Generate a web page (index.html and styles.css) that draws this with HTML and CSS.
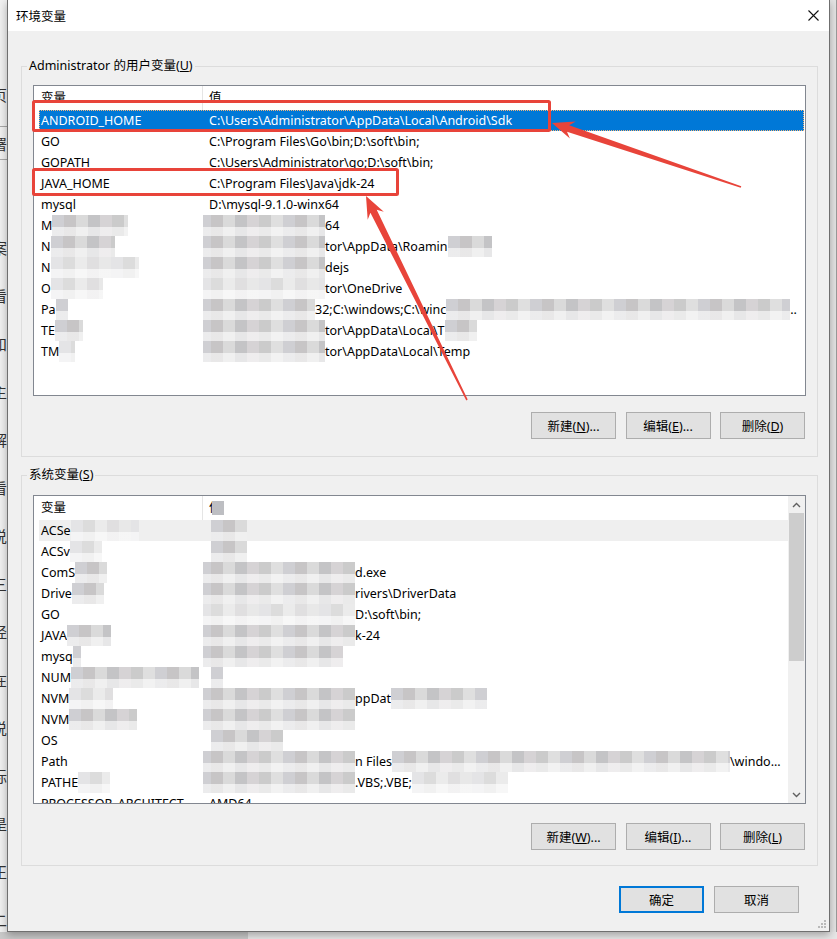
FILE: index.html
```html
<!DOCTYPE html>
<html lang="zh-CN">
<head>
<meta charset="UTF-8">
<title>环境变量</title>
<link rel="stylesheet" href="styles.css">
</head>
<body>
<div class="desk">
    <div class="behind">
        <div class="bh-char">页</div>
        <div class="bh-char bh-boxed">署</div>
        <div class="bh-gap"></div>
        <div class="bh-char">案</div>
        <div class="bh-char">看</div>
        <div class="bh-char">和</div>
        <div class="bh-char">主</div>
        <div class="bh-char">解</div>
        <div class="bh-char">看</div>
        <div class="bh-char">说</div>
        <div class="bh-char">三</div>
        <div class="bh-char">经</div>
        <div class="bh-char">在</div>
        <div class="bh-char">说</div>
        <div class="bh-char">标</div>
        <div class="bh-char">是</div>
        <div class="bh-char">正</div>
        <div class="bh-char">二</div>
    </div>

    <div class="dialog">
        <div class="titlebar">
            <span class="title">环境变量</span>
            <svg class="close" width="11" height="11" viewBox="0 0 11 11">
                <path d="M0.5 0.5 L10.5 10.5 M10.5 0.5 L0.5 10.5" stroke="#111" stroke-width="1.1" fill="none"/>
            </svg>
        </div>

        <div class="dialog-body">
            <fieldset class="group">
                <legend>Administrator 的用户变量(<u>U</u>)</legend>
                <div class="listview">
                    <div class="lv-body">
                        <div class="lv-head"><span class="col-name">变量</span><span class="col-val">值</span></div>
                        <div class="lv-row selected"><span class="col-name">ANDROID_HOME</span><span class="col-val">C:\Users\Administrator\AppData\Local\Android\Sdk</span></div>
                        <div class="lv-row"><span class="col-name">GO</span><span class="col-val">C:\Program Files\Go\bin;D:\soft\bin;</span></div>
                        <div class="lv-row"><span class="col-name">GOPATH</span><span class="col-val">C:\Users\Administrator\go;D:\soft\bin;</span></div>
                        <div class="lv-row"><span class="col-name">JAVA_HOME</span><span class="col-val">C:\Program Files\Java\jdk-24</span></div>
                        <div class="lv-row"><span class="col-name">mysql</span><span class="col-val">D:\mysql-9.1.0-winx64</span></div>
                        <div class="lv-row"><span class="col-name">M<i class="mz w76"></i></span><span class="col-val"><i class="mz pull w126"></i>64</span></div>
                        <div class="lv-row"><span class="col-name">N<i class="mz w64"></i></span><span class="col-val"><i class="mz pull w126"></i>tor\AppData\Roamin<i class="mz w44"></i></span></div>
                        <div class="lv-row"><span class="col-name">N<i class="mz light w88"></i></span><span class="col-val"><i class="mz pull w126"></i>dejs</span></div>
                        <div class="lv-row"><span class="col-name">O<i class="mz light w52"></i></span><span class="col-val"><i class="mz pull light w126"></i>tor\OneDrive</span></div>
                        <div class="lv-row"><span class="col-name">Pa<i class="mz w12"></i></span><span class="col-val"><i class="mz pull w116"></i>32;C:\windows;C:\winc<i class="mz w344"></i>..</span></div>
                        <div class="lv-row"><span class="col-name">TE<i class="mz w28"></i></span><span class="col-val"><i class="mz pull w126"></i>tor\AppData\Local\T<i class="mz w32"></i></span></div>
                        <div class="lv-row"><span class="col-name">TM<i class="mz light w16"></i></span><span class="col-val"><i class="mz pull w126"></i>tor\AppData\Local\Temp</span></div>
                    </div>
                </div>
                <div class="btn-row">
                    <button class="btn">新建(<u>N</u>)...</button>
                    <button class="btn">编辑(<u>E</u>)...</button>
                    <button class="btn">删除(<u>D</u>)</button>
                </div>
            </fieldset>

            <fieldset class="group group-system">
                <legend>系统变量(<u>S</u>)</legend>
                <div class="listview">
                    <div class="lv-body">
                        <div class="lv-head"><span class="col-name">变量</span><span class="col-val">值<i class="mz head-mz w12"></i></span></div>
                        <div class="lv-row hover"><span class="col-name">ACSe<i class="mz light w68"></i></span><span class="col-val"><i class="mz pull-s w36"></i></span></div>
                        <div class="lv-row"><span class="col-name">ACSv<i class="mz light w32"></i></span><span class="col-val"><i class="mz pull-s w36"></i></span></div>
                        <div class="lv-row"><span class="col-name">ComS<i class="mz w32"></i></span><span class="col-val"><i class="mz pull w156"></i>d.exe</span></div>
                        <div class="lv-row"><span class="col-name">Drive<i class="mz w32"></i></span><span class="col-val"><i class="mz pull w156"></i>rivers\DriverData</span></div>
                        <div class="lv-row"><span class="col-name">GO</span><span class="col-val"><i class="mz pull light w156"></i>D:\soft\bin;</span></div>
                        <div class="lv-row"><span class="col-name">JAVA<i class="mz w44"></i></span><span class="col-val"><i class="mz pull w156"></i>k-24</span></div>
                        <div class="lv-row"><span class="col-name">mysq<i class="mz w8"></i></span><span class="col-val"><i class="mz pull w144"></i></span></div>
                        <div class="lv-row"><span class="col-name">NUM<i class="mz w128"></i></span><span class="col-val"><i class="mz pull-s w12"></i></span></div>
                        <div class="lv-row"><span class="col-name">NVM<i class="mz light w44"></i></span><span class="col-val"><i class="mz pull w156"></i>ppDat<i class="mz w96"></i></span></div>
                        <div class="lv-row"><span class="col-name">NVM<i class="mz w68"></i></span><span class="col-val"><i class="mz pull w156"></i></span></div>
                        <div class="lv-row"><span class="col-name">OS</span><span class="col-val"><i class="mz pull-s w72"></i></span></div>
                        <div class="lv-row"><span class="col-name">Path</span><span class="col-val"><i class="mz pull w156"></i>n Files<i class="mz w338"></i>\windo...</span></div>
                        <div class="lv-row"><span class="col-name">PATHE<i class="mz light w32"></i></span><span class="col-val"><i class="mz pull w156"></i>.VBS;.VBE;<i class="mz light w96"></i></span></div>
                        <div class="lv-row"><span class="col-name">PROCESSOR_ARCHITECT...</span><span class="col-val">AMD64</span></div>
                    </div>
                    <div class="scrollbar">
                        <div class="sb-btn">
                            <svg width="9" height="6" viewBox="0 0 9 6"><path d="M1 5 L4.5 1.5 L8 5" stroke="#606060" stroke-width="1.4" fill="none"/></svg>
                        </div>
                        <div class="sb-thumb"></div>
                        <div class="sb-track"></div>
                        <div class="sb-btn">
                            <svg width="9" height="6" viewBox="0 0 9 6"><path d="M1 1 L4.5 4.5 L8 1" stroke="#606060" stroke-width="1.4" fill="none"/></svg>
                        </div>
                    </div>
                </div>
                <div class="btn-row">
                    <button class="btn">新建(<u>W</u>)...</button>
                    <button class="btn">编辑(<u>I</u>)...</button>
                    <button class="btn">删除(<u>L</u>)</button>
                </div>
            </fieldset>

            <div class="dialog-actions">
                <button class="btn btn-default">确定</button>
                <button class="btn">取消</button>
            </div>
        </div>

        <svg class="grip" width="9" height="9" viewBox="0 0 9 9">
            <rect x="6" y="0" width="2" height="2" fill="#b9b9b9"/>
            <rect x="3" y="3" width="2" height="2" fill="#b9b9b9"/>
            <rect x="6" y="3" width="2" height="2" fill="#b9b9b9"/>
            <rect x="0" y="6" width="2" height="2" fill="#b9b9b9"/>
            <rect x="3" y="6" width="2" height="2" fill="#b9b9b9"/>
            <rect x="6" y="6" width="2" height="2" fill="#b9b9b9"/>
        </svg>
    </div>

    <div class="after"></div>

    <!-- annotations drawn over the screenshot -->
    <svg class="marks" width="837" height="939" viewBox="0 0 837 939">
        <rect x="33.5" y="101.5" width="516" height="29" rx="1" fill="none" stroke="#e8443a" stroke-width="3"/>
        <rect x="33.5" y="169.5" width="364" height="25" rx="1" fill="none" stroke="#e8443a" stroke-width="3"/>
        <polygon fill="#e8443a" points="552,123 575.7,121.6 569.2,125.2 741.3,186.2 740.7,187.8 567,131.8 569.9,138.6"/>
        <polygon fill="#e8443a" points="366,196 383.8,211.7 376.7,209.7 467.7,399.6 466.3,400.4 370.4,212.8 367.7,219.7"/>
    </svg>
</div>
</body>
</html>
```

FILE: styles.css
```css
* {
    box-sizing: border-box;
}

body {
    margin: 0;
    font-family: "Noto Sans", "Noto Sans CJK SC", sans-serif;
    font-size: 12.5px;
    color: #000;
    background-color: #d8d8d8;
}

.desk {
    position: relative;
    display: flex;
    align-items: flex-start;
    width: 837px;
    height: 939px;
    overflow: hidden;
    background: linear-gradient(90deg, #c9c9c9 0 248px, #e7e7e7 248px);
}

/* window behind the dialog, only a sliver shows */
.behind {
    width: 7px;
    height: 932px;
    flex: none;
    overflow: hidden;
    padding-top: 86px;
    background-color: #f0f0f0;
}

.bh-char {
    height: 48px;
    margin-left: -8px;
    font-size: 15px;
    line-height: 18px;
    color: #333;
    white-space: nowrap;
}

.bh-boxed {
    height: 34px;
    margin-top: -8px;
    margin-bottom: 14px;
    padding-top: 8px;
    border-top: 1px solid #a8a8a8;
    border-bottom: 1px solid #a8a8a8;
}

.bh-gap {
    height: 65px;
}

.dialog {
    position: relative;
    width: 823px;
    height: 932px;
    flex: none;
    display: flex;
    flex-direction: column;
    background-color: #f0f0f0;
    border: 1px solid #6f6f6f;
    border-top: 0;
    box-shadow: 0 3px 8px rgba(0, 0, 0, 0.3);
}

.after {
    flex: 1;
    height: 932px;
    background-color: #e4e4e4;
    border-right: 1px solid #9a9a9a;
}

.titlebar {
    height: 31px;
    flex: none;
    display: flex;
    align-items: center;
    justify-content: space-between;
    padding: 0 10px 0 8px;
    background-color: #fff;
}

.title {
    font-size: 12.5px;
}

.dialog-body {
    padding: 0 11px 0 13px;
}

.group {
    margin: 26px 0 0;
    padding: 10px 11px 17px;
    min-width: 0;
    border: 1px solid #dcdcdc;
}

.group legend {
    margin-left: -6px;
    padding: 0 2px;
    line-height: 18px;
}

.group-system {
    margin-top: 9px;
    padding-top: 11px;
    padding-bottom: 15px;
}

.listview {
    display: flex;
    height: 311px;
    overflow: hidden;
    background-color: #fff;
    border: 1px solid #828790;
}

.group-system .listview {
    height: 309px;
}

.lv-body {
    flex: 1;
    min-width: 0;
    overflow: hidden;
}

.lv-head {
    display: flex;
    height: 24px;
    line-height: 24px;
    white-space: nowrap;
}

.lv-head .col-name {
    width: 169px;
    flex: none;
    padding-left: 7px;
    border-right: 1px solid #e5e5e5;
}

.lv-head .col-val {
    padding-left: 6px;
}

.lv-row {
    display: flex;
    height: 21px;
    line-height: 21px;
    margin: 0 1px 0 5px;
    white-space: nowrap;
}

.group-system .lv-row {
    margin-right: 0;
}

.lv-row .col-name {
    width: 164px;
    flex: none;
    padding-left: 2px;
    overflow: hidden;
}

.lv-row .col-val {
    flex: 1;
    min-width: 0;
    padding-left: 6px;
    overflow: hidden;
}

.lv-row.selected {
    color: #fff;
    background-color: #0078d7;
    outline: 1px dotted #f3b57a;
    outline-offset: -1px;
}

.lv-row.hover {
    background-color: #efefef;
}

/* pixelated blur over private values */
.mz {
    display: inline-block;
    vertical-align: top;
    height: 21px;
    background-image:
        linear-gradient(to bottom, rgba(255, 255, 255, 0) 0 58%, rgba(255, 255, 255, 0.6) 58%),
        repeating-linear-gradient(90deg, #cfcfd3 0 12px, #c7c5c6 12px 24px, #dadada 24px 36px, #c4c4c6 36px 48px, #d6d3d5 48px 60px, #cbcbcb 60px 72px, #dfdfdf 72px 84px);
}

.mz.light {
    background-image:
        linear-gradient(to bottom, rgba(255, 255, 255, 0) 0 58%, rgba(255, 255, 255, 0.6) 58%),
        repeating-linear-gradient(90deg, #e4e4e6 0 12px, #dcdcdc 12px 24px, #ebebeb 24px 36px, #e0dfe0 36px 48px, #e8e8e8 48px 60px);
}

.mz.pull {
    margin-left: -10px;
}

.mz.pull-s {
    margin-left: 2px;
}

.mz.head-mz {
    height: 14px;
    margin: 5px 0 0 -10px;
    background: #bdbec2;
}

.w8 { width: 8px; }
.w12 { width: 12px; }
.w16 { width: 16px; }
.w28 { width: 28px; }
.w32 { width: 32px; }
.w36 { width: 36px; }
.w44 { width: 44px; }
.w52 { width: 52px; }
.w64 { width: 64px; }
.w68 { width: 68px; }
.w72 { width: 72px; }
.w76 { width: 76px; }
.w88 { width: 88px; }
.w96 { width: 96px; }
.w116 { width: 116px; }
.w126 { width: 126px; }
.w128 { width: 128px; }
.w144 { width: 144px; }
.w156 { width: 156px; }
.w338 { width: 338px; }
.w344 { width: 344px; }

.scrollbar {
    width: 17px;
    flex: none;
    display: flex;
    flex-direction: column;
    background-color: #f0f0f0;
}

.sb-btn {
    height: 17px;
    flex: none;
    display: flex;
    align-items: center;
    justify-content: center;
}

.sb-thumb {
    height: 148px;
    margin: 0 1px;
    background-color: #cdcdcd;
}

.sb-track {
    flex: 1;
}

.btn-row {
    display: flex;
    justify-content: flex-end;
    gap: 9.5px;
    margin-top: 16px;
    padding-right: 1px;
}

.group-system .btn-row {
    margin-top: 19px;
}

.btn {
    width: 85px;
    height: 27px;
    padding: 0;
    font: inherit;
    color: #000;
    background-color: #e1e1e1;
    border: 1px solid #adadad;
}

.btn-default {
    border: 2px solid #0078d7;
}

.dialog-actions {
    display: flex;
    justify-content: flex-end;
    gap: 10px;
    margin-top: 20px;
    padding-right: 19px;
}

.grip {
    position: absolute;
    right: 2px;
    bottom: 2px;
}

.marks {
    position: absolute;
    left: 0;
    top: 0;
    pointer-events: none;
}
```
